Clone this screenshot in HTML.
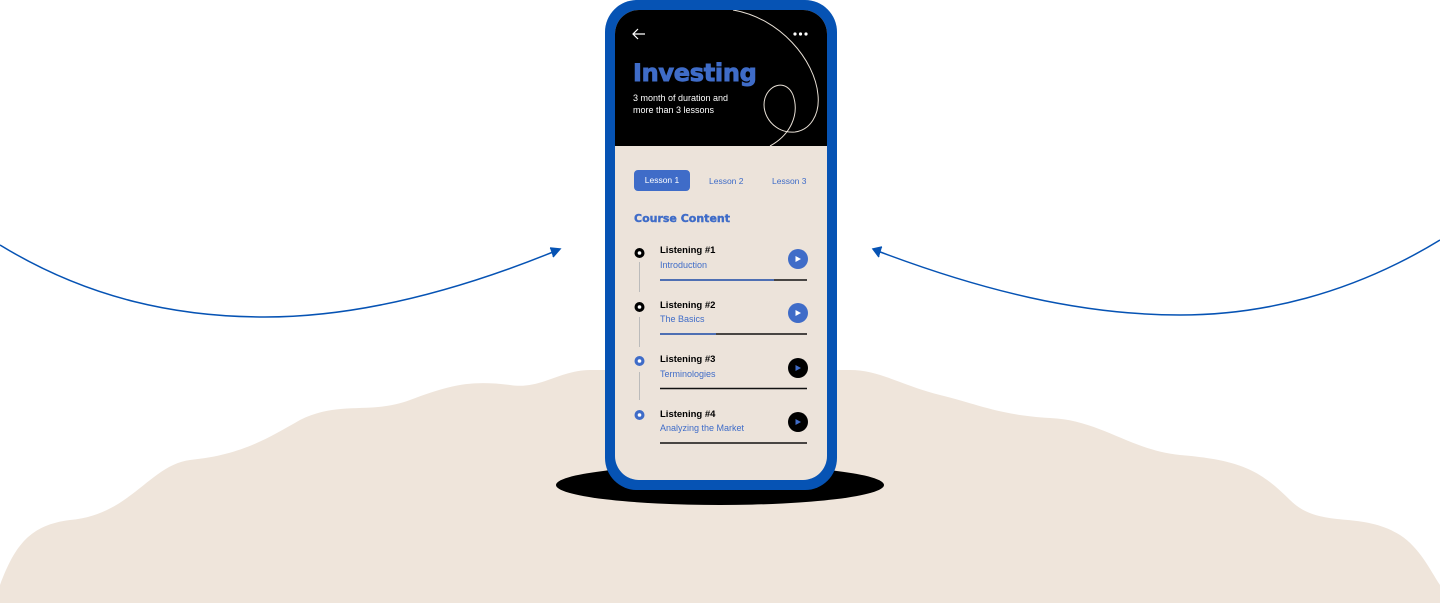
<!DOCTYPE html>
<html><head><style>
*{margin:0;padding:0;box-sizing:border-box}
body{width:1440px;height:603px;background:#fff;position:relative;overflow:hidden;font-family:"Liberation Sans",sans-serif}
.phone{position:absolute;left:605px;top:0;width:232px;height:490px;background:#0653b4;border-radius:32px}
.screen{position:absolute;left:10px;top:10px;width:212px;height:470px;background:#ece3da;border-radius:24px;overflow:hidden}
.head{position:absolute;left:0;top:0;width:212px;height:136px;background:#000}
.t{position:absolute;white-space:nowrap}
</style></head><body>
<svg width="1440" height="603" style="position:absolute;left:0;top:0">
<path d="M0,603 L0,585 C15,545 30,525 70,520 C130,515 150,465 190,460 C240,455 265,440 300,420 C340,400 370,415 410,400 C450,385 470,380 510,385 C540,390 560,370 590,370 L850,370 C880,370 900,385 940,395 C980,405 1000,415 1050,418 C1100,420 1130,450 1180,455 C1240,460 1260,470 1290,500 C1320,530 1360,510 1400,535 C1420,548 1430,570 1440,585 L1440,603 Z" fill="#efe5db"/>
<ellipse cx="720" cy="485" rx="164" ry="20" fill="#000"/>
<path d="M0,245 C90,300 180,317 265,317 C360,317 460,290 558,250" fill="none" stroke="#0653b4" stroke-width="1.5"/>
<path d="M550,248 L560,249 L553,257" fill="#0653b4" stroke="#0653b4" stroke-width="1.5"/>
<path d="M1440,240 C1350,295 1260,315 1180,315 C1080,315 980,290 875,250" fill="none" stroke="#0653b4" stroke-width="1.5"/>
<path d="M882,247 L873,249 L879,257" fill="#0653b4" stroke="#0653b4" stroke-width="1.5"/>
</svg>
<div class="phone"><div class="screen">
<div class="head">
<svg width="212" height="136" style="position:absolute;left:0;top:0">
<path d="M118,0 C165,8 200,50 203,85 C205,105 195,120 180,122 C160,124 145,105 150,88 C155,73 172,70 178,85 C185,105 175,125 155,136" fill="none" stroke="#e8e0d6" stroke-width="1"/>
<path d="M30,24 L18,24 M23,19 L18,24 L23,29" fill="none" stroke="#fff" stroke-width="1.2"/>
<circle cx="180" cy="24" r="1.6" fill="#fff"/><circle cx="185.5" cy="24" r="1.6" fill="#fff"/><circle cx="191" cy="24" r="1.6" fill="#fff"/>
</svg>
<div class="t" style="left:18px;top:49px;font-size:24px;font-weight:900;color:#3f6cc8;letter-spacing:-0.3px;-webkit-text-stroke:0.9px #3f6cc8;font-family:'DejaVu Sans',sans-serif">Investing</div>
<div class="t" style="left:18px;top:83px;font-size:9px;line-height:11.5px;color:#fff">3 month of duration and<br>more than 3 lessons</div>
</div>
<div class="t" style="left:19px;top:160px;width:56px;height:21px;background:#3f6cc8;border-radius:4px;color:#fff;font-size:8.5px;line-height:21px;text-align:center">Lesson 1</div>
<div class="t" style="left:94px;top:166px;font-size:8.5px;color:#3f6cc8">Lesson 2</div>
<div class="t" style="left:157px;top:166px;font-size:8.5px;color:#3f6cc8">Lesson 3</div>
<div class="t" style="left:19px;top:202px;font-size:11px;font-weight:900;color:#3f6cc8;-webkit-text-stroke:0.4px #3f6cc8;font-family:'DejaVu Sans',sans-serif">Course Content</div>
<svg width="212" height="300" style="position:absolute;left:0;top:225px">
<line x1="24.5" y1="27" x2="24.5" y2="57" stroke="#bbb"/>
<line x1="24.5" y1="82" x2="24.5" y2="112" stroke="#bbb"/>
<line x1="24.5" y1="137" x2="24.5" y2="165" stroke="#bbb"/>
<circle cx="24.5" cy="18" r="5" fill="#000"/><circle cx="24.5" cy="18" r="1.8" fill="#fff"/>
<circle cx="24.5" cy="72" r="5" fill="#000"/><circle cx="24.5" cy="72" r="1.8" fill="#fff"/>
<circle cx="24.5" cy="126" r="5" fill="#3f6cc8"/><circle cx="24.5" cy="126" r="1.8" fill="#fff"/>
<circle cx="24.5" cy="180" r="5" fill="#3f6cc8"/><circle cx="24.5" cy="180" r="1.8" fill="#fff"/>
<circle cx="183" cy="24" r="10" fill="#3f6cc8"/><path d="M180.5,21 L186,24 L180.5,27Z" fill="#fff"/>
<circle cx="183" cy="78" r="10" fill="#3f6cc8"/><path d="M180.5,75 L186,78 L180.5,81Z" fill="#fff"/>
<circle cx="183" cy="133" r="10" fill="#000"/><path d="M180.5,130 L186,133 L180.5,136Z" fill="#3f6cc8"/>
<circle cx="183" cy="187" r="10" fill="#000"/><path d="M180.5,184 L186,187 L180.5,190Z" fill="#3f6cc8"/>
<line x1="45" y1="45" x2="192" y2="45" stroke="#111" stroke-width="1.5"/><line x1="45" y1="45" x2="159" y2="45" stroke="#3f6cc8" stroke-width="1.5"/>
<line x1="45" y1="99" x2="192" y2="99" stroke="#111" stroke-width="1.5"/><line x1="45" y1="99" x2="101" y2="99" stroke="#3f6cc8" stroke-width="1.5"/>
<line x1="45" y1="153.5" x2="192" y2="153.5" stroke="#111" stroke-width="1.5"/>
<line x1="45" y1="208" x2="192" y2="208" stroke="#111" stroke-width="1.5"/>
</svg>
<div class="t" style="left:45px;top:235px;font-size:9.5px;font-weight:bold;color:#000">Listening #1</div>
<div class="t" style="left:45px;top:250px;font-size:9px;color:#3f6cc8">Introduction</div>
<div class="t" style="left:45px;top:290px;font-size:9.5px;font-weight:bold;color:#000">Listening #2</div>
<div class="t" style="left:45px;top:304px;font-size:9px;color:#3f6cc8">The Basics</div>
<div class="t" style="left:45px;top:344px;font-size:9.5px;font-weight:bold;color:#000">Listening #3</div>
<div class="t" style="left:45px;top:359px;font-size:9px;color:#3f6cc8">Terminologies</div>
<div class="t" style="left:45px;top:399px;font-size:9.5px;font-weight:bold;color:#000">Listening #4</div>
<div class="t" style="left:45px;top:413px;font-size:9px;color:#3f6cc8">Analyzing the Market</div>
</div></div>
</body></html>
